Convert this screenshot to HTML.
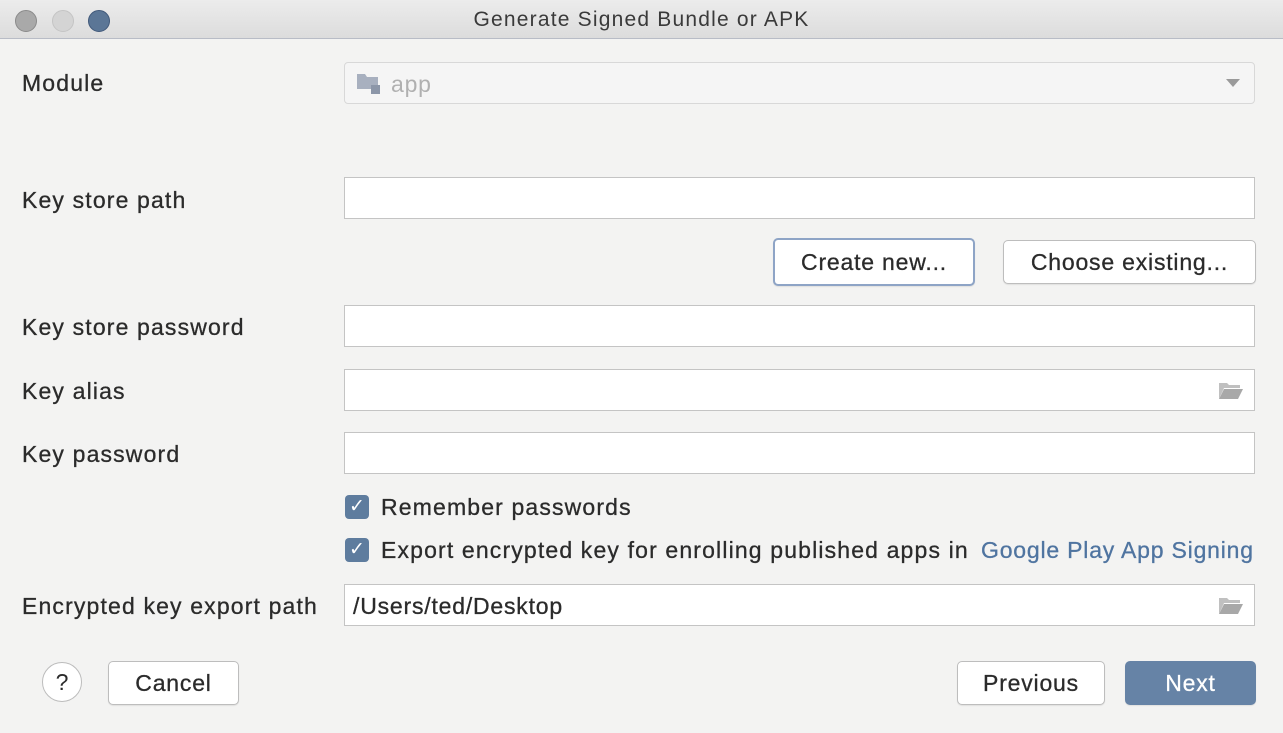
<!DOCTYPE html>
<html><head><style>
body{margin:0;width:1283px;height:733px;background:#f3f3f2;font-family:"Liberation Sans",sans-serif;position:relative;overflow:hidden;color:#2b2b2b}
.t{position:absolute;font-size:23px;letter-spacing:1.15px;-webkit-text-stroke:.3px #2b2b2b;white-space:nowrap}
.f{position:absolute;left:344px;width:909px;height:40px;background:#fff;border:1px solid #c4c4c4}
.b{position:absolute;background:#fff;border:1px solid #bdbdbd;border-radius:5px;font-size:23px;letter-spacing:.8px;-webkit-text-stroke:.3px #2b2b2b;text-align:center;box-shadow:0 1px 1px rgba(0,0,0,.08)}
.cb{position:absolute;left:345px;width:24px;height:24px;background:#5e7c9e;border-radius:4px;color:#fff;font-size:19px;text-align:center;line-height:24px}
.dot{position:absolute;top:10px;width:20px;height:20px;border-radius:50%}
.fold{position:absolute;right:10px;top:12px}
</style></head><body>
<div style="position:absolute;left:0;top:0;width:1283px;height:38px;background:linear-gradient(#ececec,#dcdcdc);border-bottom:1px solid #b8bcc6"></div>
<div class="dot" style="left:15px;background:#a9a9a9;border:1px solid #8a8a8a"></div>
<div class="dot" style="left:52px;background:#d4d4d4;border:1px solid #c4c4c4"></div>
<div class="dot" style="left:88px;background:#5b7696;border:1px solid #41597a"></div>
<div class="t" style="left:0;width:1283px;text-align:center;top:8px;font-size:21px;letter-spacing:1.2px;color:#3a3a3a;-webkit-text-stroke:0">Generate Signed Bundle or APK</div>

<div class="t" style="left:22px;top:70px">Module</div>
<div class="f" style="top:62px;background:#f5f5f5;border-color:#d8d8d8;border-radius:4px">
<svg style="position:absolute;left:12px;top:9px" width="28" height="24"><path d="M0 2h8l2 3h11v12H0z" fill="#a8b0bf"/><rect x="14" y="13" width="9" height="9" fill="#8c96a8"/></svg>
<span style="position:absolute;left:46px;top:8px;font-size:23px;letter-spacing:.8px;color:#b0b0b0">app</span>
<svg style="position:absolute;right:14px;top:16px" width="14" height="8"><path d="M0 0h14L7 8z" fill="#9a9a9a"/></svg></div>

<div class="t" style="left:22px;top:187px">Key store path</div>
<div class="f" style="top:177px"></div>
<div class="b" style="left:773px;top:238px;width:198px;height:44px;line-height:44px;border:2px solid #8ea4c6">Create new...</div>
<div class="b" style="left:1003px;top:240px;width:251px;height:42px;line-height:42px">Choose existing...</div>

<div class="t" style="left:22px;top:314px">Key store password</div>
<div class="f" style="top:305px"></div>
<div class="t" style="left:22px;top:378px">Key alias</div>
<div class="f" style="top:369px"><svg class="fold" width="26" height="18"><path d="M1 1h8l2 2h11v3H6L1 17z" fill="#c0c0c0"/><path d="M6 7h19l-5 10H1z" fill="#a8a8a8"/></svg></div>
<div class="t" style="left:22px;top:441px">Key password</div>
<div class="f" style="top:432px"></div>

<div class="cb" style="top:495px">✓</div>
<div class="t" style="left:381px;top:494px">Remember passwords</div>
<div class="cb" style="top:538px">✓</div>
<div class="t" style="left:381px;top:537px">Export encrypted key for enrolling published apps in</div>
<div class="t" style="left:981px;top:537px;letter-spacing:.8px;color:#4f74a0;-webkit-text-stroke:.3px #4f74a0">Google Play App Signing</div>

<div class="t" style="left:22px;top:593px">Encrypted key export path</div>
<div class="f" style="top:584px"><span class="t" style="left:8px;top:8px;letter-spacing:.8px">/Users/ted/Desktop</span><svg class="fold" width="26" height="18"><path d="M1 1h8l2 2h11v3H6L1 17z" fill="#c0c0c0"/><path d="M6 7h19l-5 10H1z" fill="#a8a8a8"/></svg></div>

<div style="position:absolute;left:42px;top:662px;width:38px;height:38px;border:1px solid #bcbcbc;border-radius:50%;background:#fff;text-align:center;line-height:38px;font-size:23px">?</div>
<div class="b" style="left:108px;top:661px;width:129px;height:42px;line-height:42px">Cancel</div>
<div class="b" style="left:957px;top:661px;width:146px;height:42px;line-height:42px">Previous</div>
<div class="b" style="left:1125px;top:661px;width:129px;height:42px;line-height:42px;background:#6683a6;border-color:#6683a6;color:#fff;-webkit-text-stroke:.3px #fff">Next</div>
</body></html>
